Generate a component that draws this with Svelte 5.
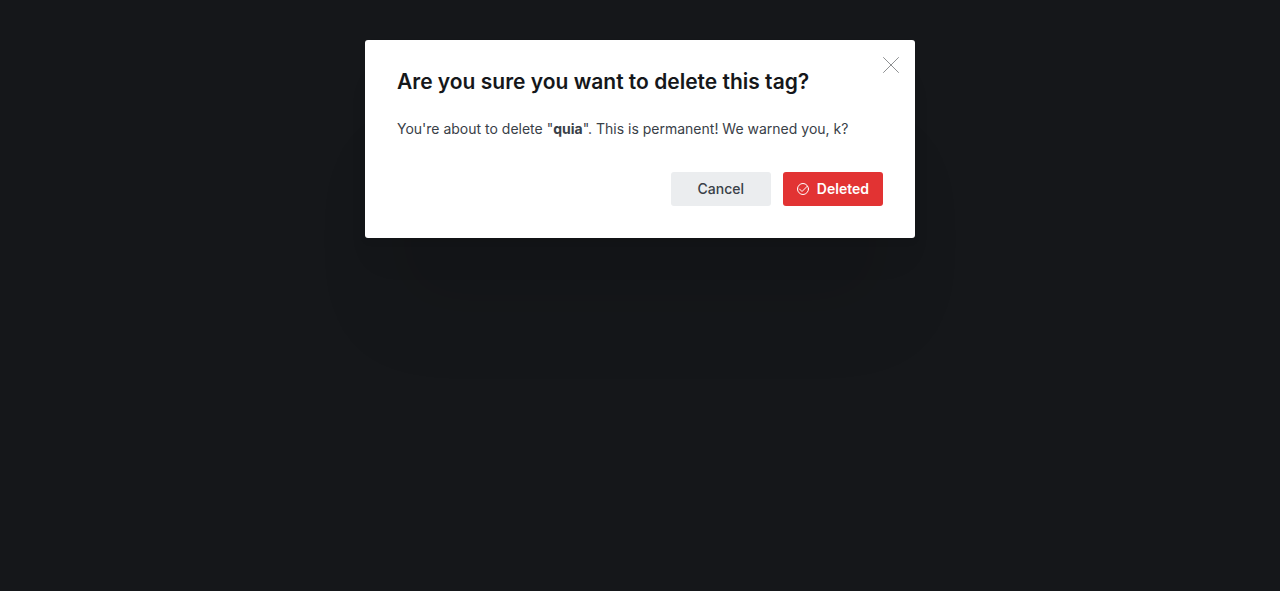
<script>
  let open = $state(true);
  const close = () => (open = false);
</script>

<main>
  {#if open}
    <div class="modal" role="dialog" aria-modal="true" aria-labelledby="modal-title">
      <header>
        <h1 id="modal-title">Are you sure you want to delete this tag?</h1>
      </header>
      <button class="close" type="button" aria-label="Close" onclick={close}>
        <svg viewBox="0 0 24 24" width="16" height="16" aria-hidden="true">
          <path d="M.75 23.249l22.5-22.5M23.25 23.249L.75.749" />
        </svg>
      </button>
      <p>You're about to delete "<strong>quia</strong>". This is permanent! We warned you, k?</p>
      <footer>
        <button class="btn" type="button" onclick={close}>Cancel</button>
        <button class="btn danger" type="button">
          <svg viewBox="0 0 24 24" width="12" height="12" aria-hidden="true">
            <path d="M5 12l5 5L20.500 6.500" />
            <circle cx="12" cy="12" r="11" />
          </svg>
          Deleted
        </button>
      </footer>
    </div>
  {/if}
</main>

<style>
  :global(body) {
    margin: 0;
    background: #15171a;
  }

  main {
    box-sizing: border-box;
    min-height: 100vh;
    padding: 40px 0;
  }

  .modal {
    position: relative;
    box-sizing: border-box;
    max-width: 550px;
    margin: 0 auto;
    padding: 28px 32px 32px;
    border-radius: 3px;
    background: #fff;
    color: #394047;
    font-family: Inter, sans-serif;
    box-shadow:
      0 4px 7px rgba(0, 0, 0, 0.04),
      0 30px 30px -10px rgba(0, 0, 0, 0.05),
      0 100px 80px -20px rgba(0, 0, 0, 0.07);
  }

  h1 {
    margin: 0 20px 23px 0;
    color: #15171a;
    font-size: 21px;
    font-weight: 600;
    line-height: 28px;
  }

  p {
    margin: 0 0 33px;
    font-size: 14px;
    line-height: 20px;
  }

  strong {
    font-weight: 700;
  }

  footer {
    display: flex;
    justify-content: flex-end;
    gap: 12px;
  }

  button {
    border: 0;
    font: inherit;
    cursor: pointer;
  }

  svg {
    overflow: visible;
    fill: none;
    stroke: currentColor;
    stroke-linecap: round;
    stroke-linejoin: round;
  }

  .close {
    position: absolute;
    top: 9px;
    right: 8px;
    display: flex;
    padding: 8px;
    background: none;
    color: #54575b;
  }

  .btn {
    display: flex;
    align-items: center;
    justify-content: center;
    gap: 8px;
    min-width: 100px;
    height: 34px;
    padding: 0 14px 1px;
    border-radius: 3px;
    background: #ebedef;
    color: #394047;
    font-size: 14px;
    font-weight: 500;
    line-height: 17px;
  }

  .danger {
    background: #e23333;
    color: #fff;
    font-weight: 600;
  }

  .danger svg {
    stroke-width: 2;
  }
</style>
